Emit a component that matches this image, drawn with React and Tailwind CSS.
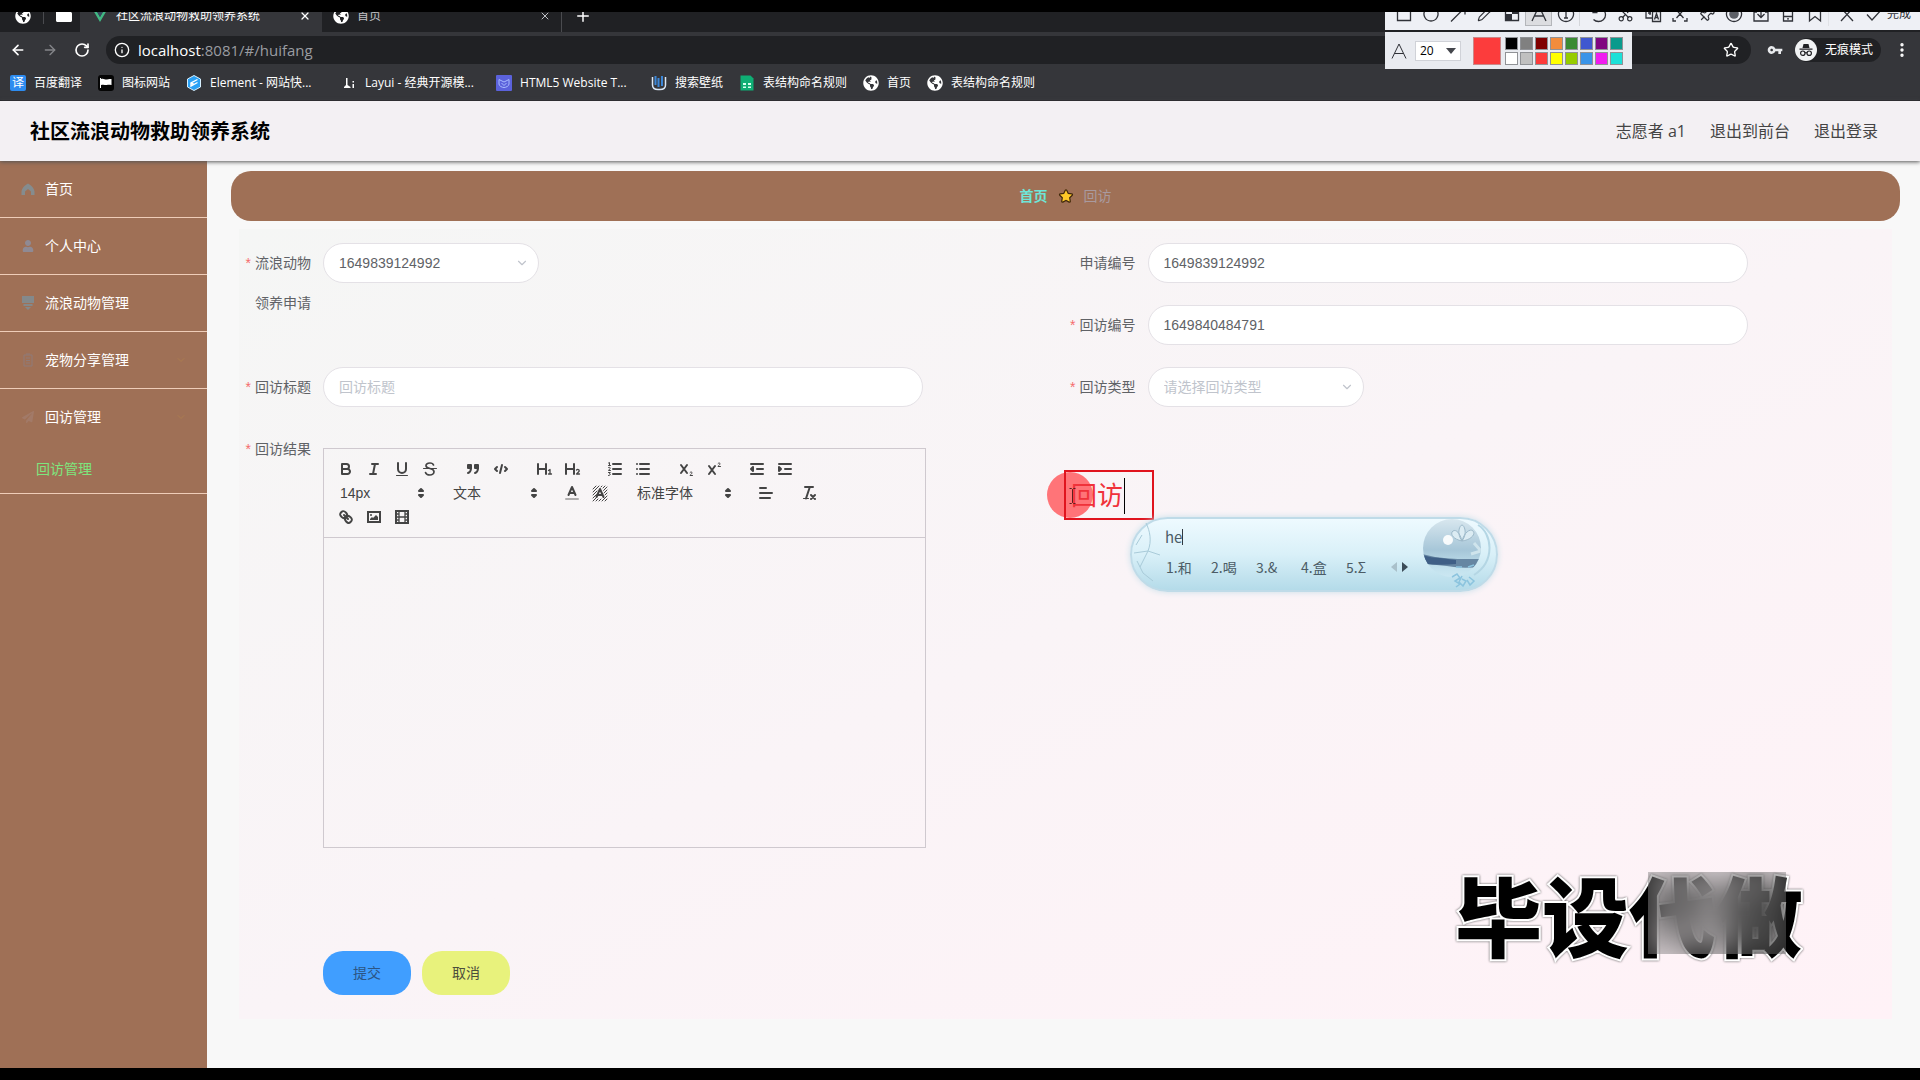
import React, { useState } from "react";
import {
  FaStar,
  FaFolder,
  FaUser,
  FaPaperPlane,
  FaGlobeAmericas,
} from "react-icons/fa";
import { MdVpnKey } from "react-icons/md";
import {
  ArrowLeft,
  ArrowRight,
  RotateCw,
  Info,
  X,
  Plus,
  Star,
  ChevronDown,
  Pencil,
  Scissors,
  Pin,
  EllipsisVertical,
} from "lucide-react";

const menuItems = [
  { label: "首页", icon: "home" },
  { label: "个人中心", icon: "user" },
  { label: "流浪动物管理", icon: "platform" },
  { label: "宠物分享管理", icon: "order", arrow: true },
  { label: "回访管理", icon: "plane", arrow: true, children: ["回访管理"] },
];

const bookmarks = [
  { label: "百度翻译", icon: "translate" },
  { label: "图标网站", icon: "flag" },
  { label: "Element - 网站快...", icon: "element", wide: true },
  { label: "Layui - 经典开源模...", icon: "layui", wide: true },
  { label: "HTML5 Website T...", icon: "html", wide: true },
  { label: "搜索壁纸", icon: "wallpaper" },
  { label: "表结构命名规则", icon: "sheet" },
  { label: "首页", icon: "globe" },
  { label: "表结构命名规则", icon: "globe" },
];

const swatches = [
  "bg-[#000000]",
  "bg-[#808080]",
  "bg-[#800000]",
  "bg-[#f28c3c]",
  "bg-[#3a8a32]",
  "bg-[#4058d0]",
  "bg-[#800880]",
  "bg-[#0a9a8c]",
  "bg-[#ffffff]",
  "bg-[#c0c0c0]",
  "bg-[#fc3a3a]",
  "bg-[#ffff00]",
  "bg-[#96cc00]",
  "bg-[#3a94e8]",
  "bg-[#f01cf0]",
  "bg-[#1ce0d8]",
];

function MenuIcon({ name }) {
  if (name === "user") return <FaUser size={12} className="text-[#8f8a94]" />;
  if (name === "plane") return <FaPaperPlane size={12} className="text-[#a27a68]" />;
  if (name === "home") {
    return (
      <svg viewBox="0 0 14 14" className="h-[14px] w-[14px] fill-[#858c8e]">
        <path d="M7 1.500C4 3 1 6 0.500 9.500V13H4V9.500L7 7l3 2.500V13h3.500V9.500C13 6 10 3 7 1.500Z" />
      </svg>
    );
  }
  if (name === "platform") {
    return (
      <svg viewBox="0 0 14 14" className="h-[14px] w-[14px] fill-[#84898b]">
        <path d="M1 0h12v7H1ZM2.500 8h9v2h-9ZM4 11h6l-3 3Z" />
      </svg>
    );
  }
  return (
    <svg viewBox="0 0 14 14" className="h-[14px] w-[14px] fill-none stroke-[#8f7a78]">
      <path d="M3 2h8v11H3ZM5 5h4M5 7.500h4M5 10h4M5 1h4" />
    </svg>
  );
}

function BookmarkIcon({ name }) {
  if (name === "translate") {
    return (
      <span className="flex h-4 w-4 items-center justify-center rounded-xs bg-[#2d8cf0] text-xs leading-none">译</span>
    );
  }
  if (name === "globe") return <FaGlobeAmericas size={16} className="text-white" />;
  if (name === "flag") {
    return (
      <svg viewBox="0 0 16 16" className="h-4 w-4">
        <rect width="16" height="16" rx="3" fill="#050505" />
        <path d="M2.500 3v10" stroke="#fff" />
        <path d="M3 4c3-1 4 1 6 0.500s3-.5 4.500-.5v6c-2 0-3-.5-4.500 0s-3-1-6 0Z" fill="#fff" />
      </svg>
    );
  }
  if (name === "element") {
    return (
      <svg viewBox="0 0 16 16" className="h-4 w-4">
        <path d="M8 0.500 14.500 4v8L8 15.500 1.500 12V4Z" fill="#2aa1f5" stroke="#d8f0ff" />
        <path d="M11.500 4.500 5 8v3l6.500-3.500M5 8l3 1.500" fill="none" stroke="#fff" strokeWidth="1.400" />
      </svg>
    );
  }
  if (name === "layui") {
    return (
      <svg viewBox="0 0 16 16" className="h-4 w-4 fill-white">
        <path d="M5 3h1.500v7l3 2v1H3v-1l2-2ZM11.500 6H13v1.500h-1.500ZM11.500 9H13v4h-1.500Z" />
      </svg>
    );
  }
  if (name === "html") {
    return (
      <svg viewBox="0 0 16 16" className="h-4 w-4">
        <rect width="16" height="16" rx="1" fill="#5b62dc" />
        <path d="M3 4.500 8 7l5-2.500V9c0 2-3 3.500-5 3.500S3 11 3 9ZM5.500 8 8 10.500 10.500 8" fill="none" stroke="#a9bbff" />
      </svg>
    );
  }
  if (name === "wallpaper") {
    return (
      <svg viewBox="0 0 16 16" className="h-4 w-4 fill-none">
        <path d="M1.500 2v8c0 3 2.500 4.500 5.500 4.500h2c3 0 5.500-1.500 5.500-4.500V2" stroke="#dbe7f5" strokeWidth="1.500" />
        <path d="M4.500 1v9M7.500 3v9M11 1v10" stroke="#3c86d6" strokeWidth="2" />
      </svg>
    );
  }
  return (
    <svg viewBox="0 0 16 16" className="h-4 w-4">
      <path d="M1.500 0.500h10l3 3v12h-13Z" fill="#0fae74" />
      <path d="M4 8h3v2H4ZM9 8h3v2H9ZM4 11.500h3v1.500H4ZM9 11.500h3v1.500H9Z" fill="#d5ffee" />
    </svg>
  );
}

function BrowserBar() {
  return (
    <div className="font-['Open_Sans','Noto_Sans_CJK_SC',sans-serif] text-xs text-white">
      {/* Tab strip */}
      <div className="flex h-5 items-end overflow-hidden bg-[#202124]">
        <div className="flex h-8 w-20 shrink-0 items-center pl-[15px]">
          <FaGlobeAmericas size={16} />
          <span className="mx-3 h-4 w-px bg-[#4a4b4f]" />
          <FaFolder size={16} />
        </div>
        <div className="flex h-8 w-[242px] shrink-0 items-center bg-[#35363a] pr-[11px] pl-[13px]">
          <svg viewBox="0 0 14 12" className="h-3 w-[14px]">
            <path d="M0 0h3l4 7 4-7h3L7 12Z" fill="#41b883" />
            <path d="M3 0h2.500L7 2.700 8.500 0H11L7 7Z" fill="#35495e" />
          </svg>
          <span className="ml-[9px] flex-1 whitespace-nowrap">社区流浪动物救助领养系统</span>
          <button aria-label="关闭标签页"><X size={12} strokeWidth={2.5} /></button>
        </div>
        <div className="flex h-8 w-[240px] shrink-0 items-center border-r border-[#4a4b4f] pr-[10px] pl-[11px] text-[#c0c2c6]">
          <FaGlobeAmericas size={16} className="text-white" />
          <span className="ml-2 flex-1">首页</span>
          <button aria-label="关闭标签页"><X size={12} /></button>
        </div>
        <button aria-label="新标签页" className="ml-3 flex h-8 items-center"><Plus size={18} /></button>
      </div>

      {/* Address bar */}
      <div className="flex h-9 items-center gap-4 bg-[#35363a] pr-[9px] pl-[10px]">
        <button aria-label="后退"><ArrowLeft size={16} strokeWidth={2.5} /></button>
        <button aria-label="前进" className="text-[#85868a]"><ArrowRight size={16} /></button>
        <button aria-label="刷新"><RotateCw size={16} strokeWidth={2.5} /></button>
        <div className="flex h-7 flex-1 items-center rounded-full bg-[#202124] px-2">
          <Info size={16} />
          <span className="ml-2 flex-1 text-[15px] leading-5 text-[#9a9ca1]">
            <span className="text-white">localhost</span>:8081/#/huifang
          </span>
          <Star size={16} className="mr-1" />
        </div>
        <MdVpnKey size={16} className="text-[#e8eaed]" />
        <div className="-ml-1 flex h-6 items-center gap-2 rounded-full bg-[#202124] pr-2">
          <svg viewBox="0 0 22 22" className="h-[22px] w-[22px]">
            <circle cx="11" cy="11" r="11" fill="#f1f3f4" />
            <path d="M7.500 9 8.500 5h5l1 4ZM4.500 9.500h13v1.300h-13Z" fill="#202124" />
            <g fill="none" stroke="#202124" strokeWidth="1.200">
              <circle cx="7.800" cy="14.200" r="2.200" />
              <circle cx="14.200" cy="14.200" r="2.200" />
              <path d="M10 14q1-.8 2 0" />
            </g>
          </svg>
          无痕模式
        </div>
        <button aria-label="菜单" className="-ml-1"><EllipsisVertical size={18} strokeWidth={2.5} /></button>
      </div>

      {/* Bookmarks */}
      <nav className="flex h-[33px] items-center gap-4 border-b border-[#222226] bg-[#35363a] pb-0.5 pl-[10px]">
        {bookmarks.map((item, index) => (
          <a
            key={index}
            href="#"
            className={`flex shrink-0 items-center gap-2 whitespace-nowrap ${item.wide ? "w-[139px]" : ""}`}
          >
            <BookmarkIcon name={item.icon} />
            {item.label}
          </a>
        ))}
      </nav>
    </div>
  );
}

function Sidebar() {
  return (
    <aside className="w-[207px] shrink-0 bg-[#9f7056] text-sm text-white">
      <nav>
        {menuItems.map((item, index) => (
          <div key={index} className="border-b border-[#efcdb8]">
            <a href="#" className="flex h-14 items-center pl-5">
              <span className="flex w-[15px] justify-center"><MenuIcon name={item.icon} /></span>
              <span className="ml-[10px] flex-1">{item.label}</span>
              {item.arrow && <ChevronDown size={12} className="mr-5 text-[#ab7c50]" />}
            </a>
            {item.children?.map((child) => (
              <a key={child} href="#" className="flex h-12 items-center pl-9 text-[#7de67e]">
                {child}
              </a>
            ))}
          </div>
        ))}
      </nav>
    </aside>
  );
}

function FormItem({ label, id, required, children }) {
  return (
    <div className="flex">
      <label htmlFor={id} className="h-10 w-20 shrink-0 pr-3 text-right text-sm leading-10 text-[#606266]">
        {required && <span className="mr-1 text-[#f56c6c]">*</span>}
        {label}
      </label>
      {children}
    </div>
  );
}

const inputClass =
  "h-10 w-full max-w-[600px] rounded-[20px] border border-[#e4e1e6] bg-white px-[15px] text-sm text-[#606266] outline-none placeholder:text-[#c0c4cc]";

function SelectBox({ id, value, placeholder }) {
  return (
    <div className="relative w-[216px]">
      <select
        id={id}
        defaultValue={value || ""}
        className={`h-10 w-full appearance-none rounded-[20px] border border-[#e4e1e6] bg-white px-[15px] text-sm outline-none ${value ? "text-[#606266]" : "text-[#c0c4cc]"}`}
      >
        <option value={value || ""}>{value || placeholder}</option>
      </select>
      <ChevronDown size={14} className="pointer-events-none absolute top-[13px] right-[10px] text-[#c0c4cc]" />
    </div>
  );
}

function ToolButton({ label, children }) {
  return (
    <button type="button" aria-label={label} className="h-6 w-7 px-[5px] py-[3px]">
      <svg
        viewBox="0 0 18 18"
        className="h-[18px] w-[18px] fill-none stroke-[#444] stroke-2"
        strokeLinecap="round"
        strokeLinejoin="round"
      >
        {children}
      </svg>
    </button>
  );
}

function ToolSelect({ label, value, wide }) {
  return (
    <div className={`relative h-6 ${wide ? "w-[108px]" : "w-[98px]"}`}>
      <select aria-label={label} className="h-6 w-full appearance-none bg-transparent pl-2 text-sm text-[#444] outline-none">
        <option>{value}</option>
      </select>
      <svg viewBox="0 0 18 18" className="pointer-events-none absolute top-[3px] right-0 h-[18px] w-[18px] fill-[#444] stroke-[#444] stroke-2" strokeLinejoin="round">
        <polygon points="7 11 9 13 11 11 7 11" />
        <polygon points="7 7 9 5 11 7 7 7" />
      </svg>
    </div>
  );
}

function Group({ children }) {
  return <span className="mr-[15px] flex">{children}</span>;
}

function Editor() {
  return (
    <div className="mt-[19px] w-full max-w-[603px] border border-[#cfc9cf]">
      <div className="border-b border-[#cfc9cf] p-2">
        <div className="flex">
          <Group>
            <ToolButton label="加粗">
              <path d="M5,4H9.500A2.500,2.500,0,0,1,12,6.500v0A2.500,2.500,0,0,1,9.500,9H5A0,0,0,0,1,5,9V4A0,0,0,0,1,5,4Z" />
              <path d="M5,9h5.500A2.500,2.500,0,0,1,13,11.500v0A2.500,2.500,0,0,1,10.500,14H5a0,0,0,0,1,0,0V9A0,0,0,0,1,5,9Z" />
            </ToolButton>
            <ToolButton label="斜体">
              <path d="M7 4H13M5 14H11M8 14L10 4" />
            </ToolButton>
            <ToolButton label="下划线">
              <path d="M5,3V9a4.012,4.012,0,0,0,4,4H9a4.012,4.012,0,0,0,4-4V3" />
              <path d="M3.500 15.500h11" strokeWidth="1" />
            </ToolButton>
            <ToolButton label="删除线">
              <path d="M15.500 8.500H2.500" strokeWidth="1" />
              <path d="M12.500 5C12 3.500 10.500 3 9 3 6.500 3 5 4 5 5.700 5 7.500 7 8 9 8.500s4 1.200 4 3.200S11 15 9 15s-4-.8-4.500-2.500" strokeWidth="1.700" />
            </ToolButton>
          </Group>
          <Group>
            <ToolButton label="引用">
              <rect x="4" y="5" width="3" height="3" fill="#444" />
              <rect x="11" y="5" width="3" height="3" fill="#444" />
              <path d="M7,8c0,4.031-3,5-3,5M14,8c0,4.031-3,5-3,5" />
            </ToolButton>
            <ToolButton label="代码">
              <path d="M5 7 3 9 5 11M13 7 15 9 13 11M10 5 8 13" />
            </ToolButton>
          </Group>
          <Group>
            <ToolButton label="标题1">
              <path d="M3 4V14M11 4V14M11 9H3" />
              <path d="M13.500 10.500 15 9.500V14M13.500 14h3" strokeWidth="1.300" />
            </ToolButton>
            <ToolButton label="标题2">
              <path d="M3 4V14M11 4V14M11 9H3" />
              <path d="M13.500 10c1-1 3-.5 2.700 1-.2 1-2 1.700-2.700 3h3" strokeWidth="1.300" />
            </ToolButton>
          </Group>
          <Group>
            <ToolButton label="有序列表">
              <path d="M7 4H15M7 9H15M7 14H15" />
              <path d="M2.500 3 3.500 2.500V5.500M2.500 5.500H4.500M2.500 7.500c1-.5 2 0 1.700.8L2.500 10.500h2M2.500 12.500h1.800l-.8 1.300c1.200 0 1.200 1.700-1 1.700" strokeWidth="1" />
            </ToolButton>
            <ToolButton label="无序列表">
              <path d="M6 4H15M6 9H15M6 14H15M3 4H3M3 9H3M3 14H3" />
            </ToolButton>
          </Group>
          <Group>
            <ToolButton label="下标">
              <path d="M4 5 10 13M10 5 4 13" />
              <path d="M13 12.500c.7-1 2.500-.5 2 .7-.3.700-1.500 1-2 2.300h2.500" strokeWidth="1" />
            </ToolButton>
            <ToolButton label="上标">
              <path d="M4 6 10 14M10 6 4 14" />
              <path d="M13 3.500c.7-1 2.500-.5 2 .7-.3.700-1.500 1-2 2.300h2.500" strokeWidth="1" />
            </ToolButton>
          </Group>
          <Group>
            <ToolButton label="减少缩进">
              <path d="M3 14H15M3 4H15M9 9H15M5 7V11L3 9Z" />
            </ToolButton>
            <ToolButton label="增加缩进">
              <path d="M3 14H15M3 4H15M9 9H15M3 7V11L5 9Z" fill="#444" />
            </ToolButton>
          </Group>
        </div>
        <div className="flex">
          <Group><ToolSelect label="字号" value="14px" /></Group>
          <Group><ToolSelect label="标题级别" value="文本" /></Group>
          <Group>
            <ToolButton label="文字颜色">
              <path d="M3 15H15" strokeOpacity="0.4" />
              <path d="M5.500 11 9 3 12.500 11M11.600 9H6.400" />
            </ToolButton>
            <ToolButton label="背景颜色">
              <path d="M2 5 5 2M2 8 8 2M2 11 6 7M2 14 5.500 10.500M2 17 6 13M5 17 7 15M8 17 10 15M11 17 16 12M14 17 16 15M13 9 16 6M12.500 6.500 16 3M10 3 11 2M12 4 14 2M14 11 16 9" strokeWidth="1" />
              <path d="M5.500 13 9 5 12.500 13M11.600 11H6.400" />
            </ToolButton>
          </Group>
          <Group><ToolSelect label="字体" value="标准字体" wide /></Group>
          <Group>
            <ToolButton label="对齐">
              <path d="M3 9H15M3 14H13M3 4H9" />
            </ToolButton>
          </Group>
          <Group>
            <ToolButton label="清除格式">
              <path d="M5 3H13M6 14.500 9.500 4" />
              <path d="M3.500 14.500H8.500" strokeWidth="1" />
              <path d="M11 11 15 15M15 11 11 15" />
            </ToolButton>
          </Group>
        </div>
        <div className="flex">
          <ToolButton label="链接">
            <path d="M7 7 11 11" />
            <path d="M8.900,4.577a3.476,3.476,0,0,1,.36,4.679A3.476,3.476,0,0,1,4.577,8.900C3.185,7.500,2.035,6.400,4.217,4.217S7.500,3.185,8.900,4.577Z" />
            <path d="M13.423,9.100a3.476,3.476,0,0,0-4.679-.36,3.476,3.476,0,0,0,.36,4.679c1.392,1.392,2.500,2.542,4.679.36S14.815,10.500,13.423,9.100Z" />
          </ToolButton>
          <ToolButton label="图片">
            <rect x="3" y="4" width="12" height="10" strokeLinejoin="miter" />
            <circle cx="6" cy="7" r="1" fill="#444" stroke="none" />
            <polyline points="5 12 5 11 7 9 8 10 11 7 13 9 13 12 5 12" fill="#444" stroke="none" />
          </ToolButton>
          <ToolButton label="视频">
            <rect x="3" y="3" width="12" height="12" strokeLinejoin="miter" />
            <path d="M6 3V15M12 3V15M6 9H12M3 6H5M3 9H5M3 12H5M13 6H15M13 9H15M13 12H15" strokeWidth="1.300" />
          </ToolButton>
        </div>
      </div>
      <textarea id="result" className="block h-[309px] w-full resize-none bg-transparent px-4 py-3 text-sm outline-none" />
    </div>
  );
}

function ToolCell({ label, children, active }) {
  return (
    <button
      type="button"
      aria-label={label}
      className={`flex h-6 w-[27px] items-center justify-center ${active ? "border border-[#b4b6ba] bg-[#dcdde0]" : ""}`}
    >
      {children}
    </button>
  );
}

function MarkIcon({ d, children }) {
  return (
    <svg viewBox="0 0 18 18" className="h-[18px] w-[18px] fill-none stroke-[#303238]" strokeWidth="1.300">
      <path d={d} />
      {children}
    </svg>
  );
}

// Screenshot annotation toolbar that floats over the browser
function MarkupToolbar({ size, setSize }) {
  return (
    <div className="absolute top-3 right-0 w-[535px] text-[#303238]">
      <div className="flex h-[18px] items-end overflow-hidden bg-[#eef0f5] pb-1 pl-[5px] text-xs">
        <div className="flex items-center">
          <ToolCell label="矩形"><MarkIcon d="M2.500 2.500h13v13h-13Z" /></ToolCell>
          <ToolCell label="椭圆"><MarkIcon d="M9 2a7 7 0 1 0 0.010 0Z" /></ToolCell>
          <ToolCell label="箭头"><MarkIcon d="M2 16.500 16 2.500M9 2.500h7v7" /></ToolCell>
          <ToolCell label="画笔"><Pencil size={16} strokeWidth={1.7} /></ToolCell>
          <ToolCell label="马赛克">
            <MarkIcon d="M2.500 2.500h13v13h-13Z">
              <path d="M9 3h6v6H9ZM3 9h6v6H3Z" fill="#303238" stroke="none" />
            </MarkIcon>
          </ToolCell>
          <ToolCell label="文字" active><MarkIcon d="M2 16 9 1l7 15M4.500 11h9" /></ToolCell>
          <ToolCell label="序号"><MarkIcon d="M9 1.500a7.500 7.500 0 1 0 0.010 0ZM7.500 6 9 5v8M7 13h4" /></ToolCell>
          <span className="mr-[5px] h-6 w-px bg-[#d4d6da]" />
          <ToolCell label="撤销"><MarkIcon d="M3 3v4.500h4.500M3.500 7.500C6 2 15.500 3 15.500 10c0 4-3.500 6.500-7 6.500-2 0-3.500-.5-5-2" /></ToolCell>
          <ToolCell label="裁剪"><Scissors size={17} strokeWidth={1.7} className="-rotate-90" /></ToolCell>
          <ToolCell label="翻译">
            <MarkIcon d="M8 13H2V3h9v3M8.500 6.500h8v10h-8ZM4 5.500h5M4 8h3M6 4v6">
              <path d="m10.500 14.500 2-6 2 6M11 12.500h3" />
            </MarkIcon>
          </ToolCell>
          <ToolCell label="识别"><MarkIcon d="M2 5V2h3M13 2h3v3M16 13v3h-3M5 16H2v-3M5.500 5l7 8M12.500 5l-7 8" /></ToolCell>
          <ToolCell label="钉住"><Pin size={17} strokeWidth={1.7} className="rotate-45" /></ToolCell>
          <ToolCell label="录制">
            <MarkIcon d="M9 1.500a7.500 7.500 0 1 0 0.010 0Z">
              <circle cx="9" cy="9" r="4.800" fill="#5c5f66" stroke="none" />
            </MarkIcon>
          </ToolCell>
          <ToolCell label="保存"><MarkIcon d="M5 7H2v9h14V7h-3M9 2v10M5.500 9 9 12.500 12.500 9" /></ToolCell>
          <ToolCell label="发送到手机"><MarkIcon d="M4.500 2h9v14h-9ZM4.500 11.500h9M8 13.800h2" /></ToolCell>
          <ToolCell label="收藏"><MarkIcon d="M3.500 2h11v14L9 11.500 3.500 16Z" /></ToolCell>
          <span className="mr-1 h-6 w-px bg-[#e0e2e6]" />
          <ToolCell label="取消"><MarkIcon d="M3 3l12 13M15 3 3 16" /></ToolCell>
          <ToolCell label="确定"><MarkIcon d="M2 9.500 7 15 17 4" /></ToolCell>
          <span className="whitespace-nowrap">完成</span>
        </div>
      </div>
      <div className="mt-0.5 flex h-[37px] w-[247px] items-center bg-[#e9ebf0] pl-[6px]">
        <svg viewBox="0 0 16 16" className="h-4 w-4 fill-none stroke-[#303238]">
          <path d="M1 15.500 8 1l7 14.500M3.500 10.500h9" />
        </svg>
        <div className="relative ml-2">
          <select
            aria-label="字体大小"
            value={size}
            onChange={(event) => setSize(event.target.value)}
            className="block h-5 w-[46px] appearance-none border border-[#d0d2d8] bg-white pl-1 font-['Open_Sans',sans-serif] text-xs text-black outline-none"
          >
            <option>16</option>
            <option>20</option>
            <option>24</option>
          </select>
          <svg viewBox="0 0 10 6" className="pointer-events-none absolute top-[7px] right-[5px] h-[6px] w-[10px]">
            <path d="M0 0h10L5 6Z" fill="#44464c" />
          </svg>
        </div>
        <span className="ml-3 h-7 w-7 border border-[#c88] bg-[#fc3c3c]" />
        <div className="ml-1 grid grid-cols-8 gap-[2px]">
          {swatches.map((color) => (
            <button key={color} aria-label="颜色" className={`h-[13px] w-[13px] border border-[#909296] ${color}`} />
          ))}
        </div>
      </div>
    </div>
  );
}

// Input method window with its candidate words
function InputMethod() {
  return (
    <div className="absolute top-[517px] left-[1130px] flex h-[75px] w-[368px] rounded-full border-2 border-[#bfdbe8] bg-linear-to-b from-[#eefaff] via-[#d9f0f8] to-[#b4dbe9] font-['Noto_Sans_CJK_SC',sans-serif] text-[#4c5c66] shadow-[0_0_6px_#c8e0ea]">
      <svg viewBox="0 0 36 70" className="absolute top-0 left-0 h-[70px] w-9 fill-none stroke-[#a9cbd9]">
        <path d="M14 4c4 8 6 18 2 28L2 34M16 32l12 4M10 16 4 26M16 32 8 48M5 42l6 12 10 8" />
      </svg>
      <div className="pt-[6px] pl-[33px]">
        <div className="flex items-center text-[15px] leading-6">
          he<span className="h-4 w-px bg-[#303840]" />
        </div>
        <div className="mt-[6px] flex items-center pl-px text-sm leading-6">
          {["1.和", "2.喝", "3.&", "4.盒", "5.Σ"].map((word) => (
            <span key={word} className="w-[45px]">{word}</span>
          ))}
          <svg viewBox="0 0 18 10" className="h-[10px] w-[18px]">
            <path d="M6 0v10L0 5Z" fill="#a9c0ca" />
            <path d="M11 0v10l6-5Z" fill="#3c4c58" />
          </svg>
        </div>
      </div>
      <svg viewBox="0 0 80 74" className="absolute top-[-2px] right-0 h-[74px] w-20">
        <defs>
          <clipPath id="ball"><circle cx="36" cy="31" r="29" /></clipPath>
          <linearGradient id="sky" x1="0" y1="0" x2="0" y2="1">
            <stop offset="0" stopColor="#dbe9f0" />
            <stop offset="0.45" stopColor="#a6c6d8" />
            <stop offset="0.7" stopColor="#c3e2ee" />
            <stop offset="1" stopColor="#d9f0f8" />
          </linearGradient>
        </defs>
        <g clipPath="url(#ball)">
          <rect width="80" height="74" fill="url(#sky)" />
          <path d="M6 37q10 3 22 4t16 1h24v7q-16 3-30 1T6 47Z" fill="#6686a2" />
          <path d="M6 38q8 3 18 3l16 2v4q-18 2-34-1Z" fill="#3f5f86" />
          <circle cx="32" cy="23" r="5" fill="#fff" opacity="0.9" />
          <path d="M46 24c-6-8-2-16 0-16s6 8 0 16c-10-2-12-8-9-10s7 2 9 10c2-8 8-13 11-10s-2 9-11 10" fill="#dcecf3" stroke="#9db9c9" />
          <path d="M58 26l7 8-10 3" fill="none" stroke="#cfe4ec" strokeWidth="3" />
        </g>
        <path d="M62 8c14 8 18 36-4 50" fill="none" stroke="#b4d6e4" strokeWidth="2" />
        <path d="M36 60l5-3 3 4-5 3 5 3-4 3M46 59l-3 6 4 4 3-5-4-2M53 60l5 4-4 4-3-5M40 50h6M52 50l6-2" fill="none" stroke="#8cc4de" strokeWidth="1.500" />
      </svg>
    </div>
  );
}

function App() {
  const [size, setSize] = useState("20");
  const [title, setTitle] = useState("");

  return (
    <div className="relative flex min-h-screen flex-col overflow-hidden bg-black py-3 font-['Liberation_Sans','Noto_Sans_CJK_SC',sans-serif]">
      <BrowserBar />

      <header className="relative z-10 flex h-[60px] shrink-0 items-center justify-between bg-[#f3f0f3] pr-[42px] pl-[30px] shadow-[0_1px_4px_#555]">
        <h1 className="pt-0.5 text-xl font-bold text-black">社区流浪动物救助领养系统</h1>
        <div className="flex gap-6 font-['Open_Sans','Noto_Sans_CJK_SC',sans-serif] text-base text-[#444]">
          <span>志愿者 a1</span>
          <a href="#">退出到前台</a>
          <a href="#">退出登录</a>
        </div>
      </header>

      <div className="flex flex-1">
        <Sidebar />
        <main className="flex-1 bg-[#f8f8f8] pt-[10px] pr-5 pl-6">
          <div className="flex h-[50px] items-center justify-center gap-[11px] rounded-[20px] bg-[#9f7056] text-sm">
            <a href="#" className="font-bold text-[#6ee6d8]">首页</a>
            <FaStar size={14} className="fill-[#ffc928] stroke-[#40280c] stroke-[50] overflow-visible" />
            <span className="text-[#a99a9f]">回访</span>
          </div>

          {/* Form */}
          <form
            className="mx-2 mt-2 bg-linear-to-br from-[#f5f6f5] via-[#faf4f7] to-[#fff2f7] pt-[14px] pb-6 pl-1"
            onSubmit={(event) => event.preventDefault()}
          >
            <div className="grid grid-cols-2 gap-y-[22px]">
              <div className="row-span-2">
                <FormItem label="流浪动物" id="animal" required>
                  <SelectBox id="animal" value="1649839124992" />
                </FormItem>
                <FormItem label="领养申请" />
              </div>
              <FormItem label="申请编号" id="applyNo">
                <input id="applyNo" className={inputClass} defaultValue="1649839124992" />
              </FormItem>
              <FormItem label="回访编号" id="visitNo" required>
                <input id="visitNo" className={inputClass} defaultValue="1649840484791" />
              </FormItem>
              <FormItem label="回访标题" id="title" required>
                <input
                  id="title"
                  className={inputClass}
                  placeholder="回访标题"
                  value={title}
                  onChange={(event) => setTitle(event.target.value)}
                />
              </FormItem>
              <FormItem label="回访类型" id="type" required>
                <SelectBox id="type" placeholder="请选择回访类型" />
              </FormItem>
              <FormItem label="回访结果" id="result" required>
                <Editor />
              </FormItem>
            </div>
            <div className="mt-[103px] flex gap-[11px] pl-20 text-sm">
              <button type="submit" className="h-11 w-[88px] rounded-[20px] bg-[#409eff] text-[#2c5584]">提交</button>
              <button type="button" className="h-11 w-[88px] rounded-[20px] bg-[#e8f27c] text-[#4c4e3c]">取消</button>
            </div>
          </form>
        </main>
      </div>

      <MarkupToolbar size={size} setSize={setSize} />

      {/* Text annotation being typed */}
      <div className="absolute top-[472px] left-[1047px] h-[46px] w-[46px] rounded-full bg-[#ff7478]" />
      <div className="absolute top-[470px] left-[1064px] flex h-[50px] w-[90px] items-center border-2 border-[#e0141e] pt-0.5 pl-[5px] text-[26px] text-[#f0323a]">
        回访
        <span className="ml-px h-9 w-px bg-black" />
      </div>
      <svg viewBox="0 0 7 18" className="absolute top-[487px] left-[1069px] h-[18px] w-[7px] fill-none stroke-[#5c2020]">
        <path d="M0.500 1.500h2l1 1 1-1h2M3.500 2.500v13M0.500 16.500h2l1-1 1 1h2" />
      </svg>

      <InputMethod />

      <div className="absolute top-[869px] left-[1455px] font-['Noto_Sans_CJK_SC',sans-serif] text-[87px] leading-[88px] font-black whitespace-nowrap text-black [-webkit-text-stroke:4px_white] [filter:drop-shadow(0_0_1px_#555)] [paint-order:stroke_fill]">
        毕设代做
      </div>
      <div className="absolute top-[872px] left-[1648px] h-[82px] w-[138px] bg-[#808080]/25 backdrop-blur-lg" />
    </div>
  );
}

export default App;
